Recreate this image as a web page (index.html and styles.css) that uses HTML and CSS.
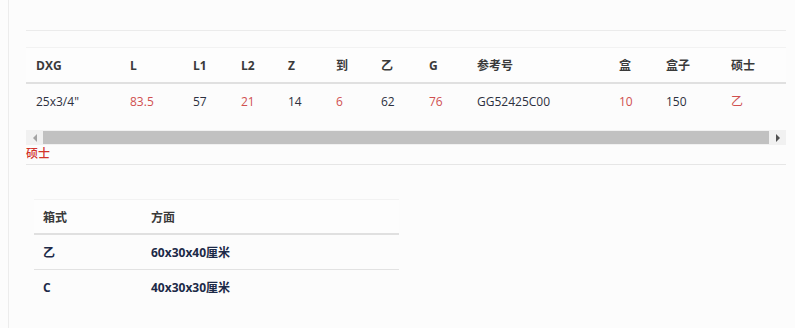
FILE: index.html
```html
<!DOCTYPE html>
<html lang="zh">
<head>
<meta charset="utf-8">
<link rel="stylesheet" href="styles.css">
</head>
<body>
<div class="page">
  <div class="topline"></div>
  <div class="spec">
    <table class="spec-table">
      <thead>
        <tr>
          <th class="c1">DXG</th><th class="c2">L</th><th class="c3">L1</th><th class="c4">L2</th><th class="c5">Z</th><th class="c6">到</th><th class="c7">乙</th><th class="c8">G</th><th class="c9">参考号</th><th class="c10">盒</th><th class="c11">盒子</th><th class="c12">硕士</th>
        </tr>
      </thead>
      <tbody>
        <tr>
          <td>25x3/4"</td><td class="red">83.5</td><td>57</td><td class="red">21</td><td>14</td><td class="red">6</td><td>62</td><td class="red">76</td><td>GG52425C00</td><td class="red">10</td><td>150</td><td class="red">乙</td>
        </tr>
      </tbody>
    </table>
    <div class="scrollbar">
      <div class="sb-btn"><span class="tri tri-left"></span></div>
      <div class="sb-thumb"></div>
      <div class="sb-btn"><span class="tri tri-right"></span></div>
    </div>
    <div class="note">硕士</div>
  </div>
  <table class="box-table">
    <thead>
      <tr><th class="b1">箱式</th><th>方面</th></tr>
    </thead>
    <tbody>
      <tr><td>乙</td><td>60x30x40厘米</td></tr>
      <tr><td>C</td><td>40x30x30厘米</td></tr>
    </tbody>
  </table>
</div>
</body>
</html>
```

FILE: styles.css
```css
html, body {
  margin: 0;
  padding: 0;
  background: #fcfcfc;
}
body {
  font-family: "Open Sans", "Noto Sans CJK SC", sans-serif;
  font-size: 12px;
  color: #333;
  height: 328px;
  overflow: hidden;
}
.page {
  margin-left: 8px;
  border-left: 1px solid #ececec;
  padding: 0 9px 0 17px;
  height: 328px;
}
.topline {
  height: 30px;
  border-bottom: 1px solid #ebebeb;
}
.spec {
  margin-top: 16px;
  border-bottom: 1px solid #e6e6e6;
}
table {
  border-collapse: collapse;
  border-spacing: 0;
}
.spec-table {
  width: 760px;
  table-layout: fixed;
  border-top: 1px solid #f2f2f2;
}
.spec-table th {
  height: 34px;
  padding: 0 10px;
  text-align: left;
  font-weight: 700;
  color: #3a3a3a;
  background: #fdfdfd;
  border-bottom: 2px solid #e0e0e0;
  white-space: nowrap;
}
.spec-table td {
  height: 34px;
  padding: 0 10px;
  color: #2c3040;
  white-space: nowrap;
}
.c1 { width: 74px; }
.c2 { width: 43px; }
.c3 { width: 28px; }
.c4 { width: 27px; }
.c5 { width: 28px; }
.c6 { width: 25px; }
.c7 { width: 28px; }
.c8 { width: 28px; }
.c9 { width: 122px; }
.c10 { width: 27px; }
.c11 { width: 45px; }
.c12 { width: 45px; }
.red { color: #d05050 !important; }
.scrollbar {
  margin-top: 12px;
  height: 15px;
  background: #f1f1f1;
  display: flex;
  align-items: stretch;
}
.sb-btn {
  width: 17px;
  display: flex;
  align-items: center;
  justify-content: center;
}
.sb-thumb {
  flex: 1;
  margin: 1px 0;
  background: #c1c1c1;
}
.tri {
  width: 0;
  height: 0;
  border-top: 4px solid transparent;
  border-bottom: 4px solid transparent;
}
.tri-left {
  border-right: 4px solid #a3a3a3;
}
.tri-right {
  border-left: 4px solid #505050;
}
.note {
  color: #d2322a;
  font-weight: 500;
  line-height: 18px;
  padding-bottom: 1px;
}
.box-table {
  margin-top: 34px;
  margin-left: 8px;
  width: 365px;
  table-layout: fixed;
  border-top: 1px solid #f2f2f2;
}
.box-table th {
  height: 33px;
  padding: 0 9px;
  text-align: left;
  font-weight: 700;
  color: #3a3a3a;
  background: #fdfdfd;
  border-bottom: 2px solid #e0e0e0;
}
.b1 { width: 90px; }
.box-table td {
  height: 34px;
  padding: 0 9px;
  font-weight: 700;
  color: #1c2a48;
}
.box-table tbody tr:first-child td {
  border-bottom: 1px solid #e2e2e2;
}
```
